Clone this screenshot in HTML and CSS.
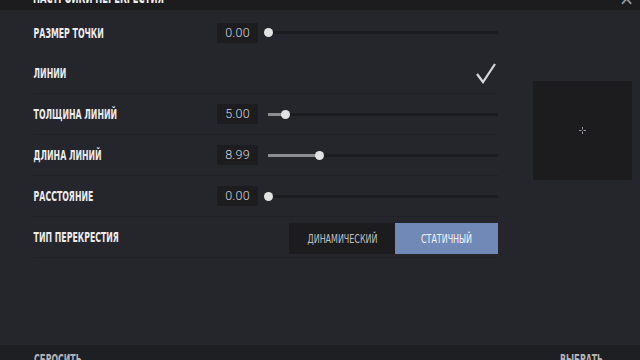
FILE: index.html
```html
<!DOCTYPE html>
<html lang="ru">
<head>
    <meta charset="UTF-8">
    <meta name="viewport" content="width=device-width, initial-scale=1.0">
    <title>Настройки перекрестия</title>
    <link rel="stylesheet" href="styles.css">
</head>
<body>
    <div class="window">
        <div class="header">
            <span class="title">НАСТРОЙКИ ПЕРЕКРЕСТИЯ</span>
            <span class="close">×</span>
        </div>
        <div class="main">
            <div class="settings">
                <div class="row">
                    <span class="label">РАЗМЕР ТОЧКИ</span>
                    <div class="control">
                        <span class="value">0.00</span>
                        <div class="slider">
                            <div class="track"><div class="fill" style="width: 0px"></div></div>
                            <div class="knob" style="left: 0px"></div>
                        </div>
                    </div>
                </div>
                <div class="row">
                    <span class="label">ЛИНИИ</span>
                    <svg class="check" width="22" height="22" viewBox="0 0 22 22">
                        <polyline points="2,12 8,20 20,2" fill="none" stroke="#d8d8dc" stroke-width="2.2"/>
                    </svg>
                </div>
                <div class="row">
                    <span class="label">ТОЛЩИНА ЛИНИЙ</span>
                    <div class="control">
                        <span class="value">5.00</span>
                        <div class="slider">
                            <div class="track"><div class="fill" style="width: 17px"></div></div>
                            <div class="knob" style="left: 17px"></div>
                        </div>
                    </div>
                </div>
                <div class="row">
                    <span class="label">ДЛИНА ЛИНИЙ</span>
                    <div class="control">
                        <span class="value">8.99</span>
                        <div class="slider">
                            <div class="track"><div class="fill" style="width: 51px"></div></div>
                            <div class="knob" style="left: 51px"></div>
                        </div>
                    </div>
                </div>
                <div class="row">
                    <span class="label">РАССТОЯНИЕ</span>
                    <div class="control">
                        <span class="value">0.00</span>
                        <div class="slider">
                            <div class="track"><div class="fill" style="width: 0px"></div></div>
                            <div class="knob" style="left: 0px"></div>
                        </div>
                    </div>
                </div>
                <div class="row">
                    <span class="label">ТИП ПЕРЕКРЕСТИЯ</span>
                    <div class="toggle">
                        <span class="option"><span class="option-text">ДИНАМИЧЕСКИЙ</span></span>
                        <span class="option active"><span class="option-text">СТАТИЧНЫЙ</span></span>
                    </div>
                </div>
            </div>
            <div class="preview">
                <svg width="7" height="7" viewBox="0 0 7 7">
                    <path d="M3.5 0v2.5M3.5 4.5v2.5M0 3.5h2.5M4.5 3.5h2.5" stroke="#9a9aa0" stroke-width="1"/>
                </svg>
            </div>
        </div>
        <div class="footer">
            <span class="action">СБРОСИТЬ</span>
            <span class="action">ВЫБРАТЬ</span>
        </div>
    </div>
</body>
</html>
```

FILE: styles.css
```css
*{
    box-sizing: border-box;
}
body{
    margin: 0;
    background-color: #25262b;
    font-family: "DejaVu Sans Condensed", "DejaVu Sans", sans-serif;
    color: #e4e4e6;
}
.window{
    width: 640px;
    height: 360px;
    display: flex;
    flex-direction: column;
    overflow: hidden;
}
.header{
    height: 10px;
    flex: none;
    background-color: #1c1c1f;
    display: flex;
    justify-content: space-between;
    padding: 0 6px 0 33px;
    overflow: hidden;
}
.title{
    display: inline-block;
    font-size: 15px;
    font-weight: bold;
    line-height: 14px;
    margin-top: -9px;
    color: #f0f0f0;
    transform: scaleX(.62);
    transform-origin: left center;
    white-space: nowrap;
}
.close{
    font-size: 20px;
    line-height: 14px;
    margin-top: -9px;
    color: #9a9aa0;
}
.main{
    flex: 1;
    display: flex;
    align-items: flex-start;
    padding: 3px 0 0 33px;
}
.settings{
    width: 465px;
    display: flex;
    flex-direction: column;
}
.row{
    height: 41px;
    display: flex;
    align-items: center;
    justify-content: space-between;
    border-bottom: 1px solid #202125;
}
.row:first-child{
    height: 40px;
    border-bottom-color: transparent;
}
.label{
    display: inline-block;
    font-size: 14.5px;
    font-weight: bold;
    padding-left: 1px;
    white-space: nowrap;
    transform: scaleX(.6);
    transform-origin: left center;
    color: #ececee;
}
.control{
    display: flex;
    align-items: center;
    gap: 4px;
}
.value{
    width: 41px;
    height: 20px;
    line-height: 20px;
    text-align: center;
    background-color: #1d1d20;
    font-family: "Roboto", sans-serif;
    font-weight: 300;
    font-size: 12.5px;
    letter-spacing: 0.2px;
    color: #d4d4d8;
}
.slider{
    position: relative;
    width: 236px;
    height: 10px;
    padding-left: 6px;
    display: flex;
    align-items: center;
}
.track{
    width: 100%;
    height: 3px;
    background-color: #1b1c1f;
}
.fill{
    height: 3px;
    background-color: #8c8c92;
}
.knob{
    position: absolute;
    top: 0.5px;
    margin-left: 1.5px;
    width: 9px;
    height: 9px;
    border-radius: 50%;
    background-color: #e2e2e4;
}
.check{
    margin-right: 1px;
}
.toggle{
    display: flex;
    height: 31px;
    margin-top: 2px;
}
.option{
    display: flex;
    align-items: center;
    justify-content: center;
    font-size: 13px;
}
.option-text{
    display: inline-block;
    white-space: nowrap;
    transform: scaleX(.68);
}
.option:first-child{
    width: 106px;
    background-color: #1c1c1f;
    color: #c0c0c4;
}
.option.active{
    width: 103px;
    background-color: #7189b6;
    color: #f2f4f8;
}
.preview{
    width: 99px;
    height: 99px;
    margin: 68px 0 0 35px;
    background-color: #1c1c1f;
    display: flex;
    align-items: center;
    justify-content: center;
}
.footer{
    height: 15px;
    flex: none;
    background-color: #1e1f22;
    display: flex;
    padding: 7px 0 0 34px;
}
.action{
    display: inline-block;
    font-size: 14px;
    font-weight: bold;
    line-height: 14px;
    color: #b4b4b8;
    white-space: nowrap;
    transform: scaleX(.62);
    transform-origin: left center;
}
.action + .action{
    margin-left: auto;
    width: 80px;
}
```
